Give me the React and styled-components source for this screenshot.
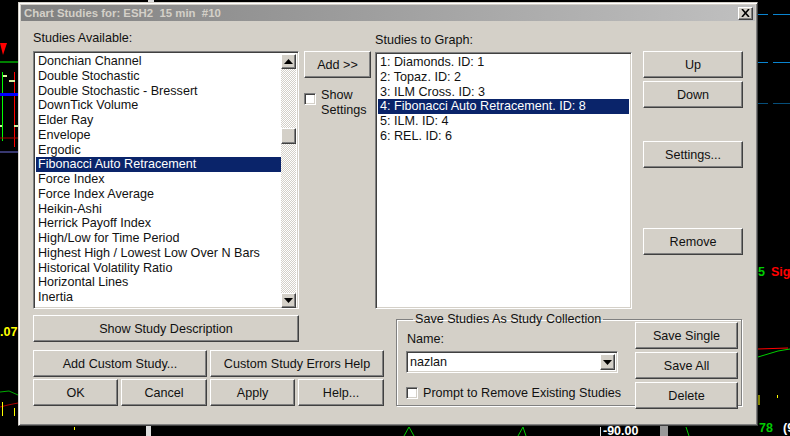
import React from "react";
import styled, { createGlobalStyle, css } from "styled-components";

const Global = createGlobalStyle`
  html, body { margin: 0; padding: 0; background: #000; }
  #root { width: 790px; height: 436px; overflow: hidden; }
`;

const face = "#d4d0c8";
const raised = css`
  background: ${face};
  border: 1px solid;
  border-color: #fff #404040 #404040 #fff;
  box-shadow: inset -1px -1px 0 #808080, inset 1px 1px 0 ${face};
`;
const sunken = css`
  background: #fff;
  border: 1px solid;
  border-color: #808080 #fff #fff #808080;
  box-shadow: inset 1px 1px 0 #404040, inset -1px -1px 0 ${face};
`;

const Desktop = styled.div`
  position: relative;
  width: 790px;
  height: 436px;
  background: #000;
  overflow: hidden;
  font-family: "Liberation Sans", Arial, sans-serif;
`;
const ChartArt = styled.svg`
  position: absolute;
  inset: 0;
`;
const ChartLabel = styled.span`
  position: absolute;
  left: ${(p) => p.$x}px;
  top: ${(p) => p.$y}px;
  color: ${(p) => p.$color};
  font: bold 12.5px/14px "Liberation Sans", Arial, sans-serif;
`;
const Dialog = styled.div`
  position: absolute;
  left: 18px;
  top: 2px;
  width: 740px;
  height: 424px;
  box-sizing: border-box;
  background: ${face};
  border: 1px solid;
  border-color: #d4d0c8 #404040 #404040 #d4d0c8;
  box-shadow: inset 1px 1px 0 #fff, inset -1px -1px 0 #808080;
  padding: 2px;
  color: #111;
  font-size: 12.6px;
`;
const TitleBar = styled.div`
  height: 16px;
  display: flex;
  align-items: center;
  justify-content: space-between;
  padding: 0 2px 0 3px;
  background: linear-gradient(90deg, #808080, #c0c0c0);
  color: #d4d0c8;
  font-weight: bold;
  font-size: 11.4px;
  white-space: pre;
`;
const CloseBox = styled.div`
  ${raised}
  width: 15px;
  height: 13px;
  box-sizing: border-box;
  display: flex;
  align-items: center;
  justify-content: center;
`;
const Body = styled.div`
  display: flex;
  padding: 10px 0 0 12px;
`;
const LeftCol = styled.div`
  width: 351px;
  display: flex;
  flex-direction: column;
`;
const Caption = styled.div`
  height: 15px;
  line-height: 15px;
  white-space: nowrap;
`;
const ListFrame = styled.div`
  ${sunken}
  box-sizing: border-box;
  position: relative;
  overflow: hidden;
  display: flex;
  width: ${(p) => p.$w}px;
  height: ${(p) => p.$h}px;
  margin-top: ${(p) => p.$mt}px;
  padding: 2px;
`;
const Rows = styled.div`
  flex: 1;
  min-width: 0;
  overflow: hidden;
`;
const Row = styled.div`
  height: 14.75px;
  line-height: 14.75px;
  padding-left: 2px;
  white-space: nowrap;
  ${(p) => p.$on && css`background: #0a246a; color: #fff;`}
`;
const ScrollTrack = styled.div`
  width: 15px;
  flex: none;
  display: flex;
  flex-direction: column;
  background-color: #ece9e2;
  background-image: conic-gradient(#fff 25%, ${face} 0 50%, #fff 0 75%, ${face} 0);
  background-size: 2px 2px;
`;
const ScrollBtn = styled.div`
  ${raised}
  width: 15px;
  height: ${(p) => p.$h || 15}px;
  box-sizing: border-box;
  flex: none;
  display: flex;
  align-items: center;
  justify-content: center;
  margin-top: ${(p) => p.$mt || 0}px;
`;
const Btn = styled.button`
  ${raised}
  box-sizing: border-box;
  padding: 0;
  height: 27px;
  width: ${(p) => p.$w || 100}px;
  margin-top: ${(p) => p.$mt || 0}px;
  flex: none;
  font: inherit;
  color: #111;
  white-space: nowrap;
`;
const BtnRow = styled.div`
  display: flex;
  gap: 3px;
  margin-top: ${(p) => p.$mt}px;
`;
const MiddleCol = styled.div`
  width: 71px;
  padding-top: 20px;
  display: flex;
  flex-direction: column;
`;
const CheckBox = styled.span`
  ${sunken}
  display: block;
  width: 12px;
  height: 12px;
  box-sizing: border-box;
  flex: none;
`;
const ShowSettings = styled.label`
  display: flex;
  gap: 5px;
  margin-top: 10px;
  line-height: 15px;
  align-items: flex-start;
  & > span:first-child { margin-top: 5px; }
`;
const RightArea = styled.div`
  display: flex;
  flex-direction: column;
`;
const TopRight = styled.div`
  display: flex;
  gap: 11px;
`;
const GraphCol = styled.div`
  width: 257px;
  padding-top: 2px;
`;
const SideButtons = styled.div`
  display: flex;
  flex-direction: column;
  padding-top: 20px;
`;
const Group = styled.fieldset`
  box-sizing: border-box;
  margin: 3px 0 0 21px;
  width: 346px;
  height: 94px;
  padding: 0 3px 0 10px;
  border: 1px solid #808080;
  box-shadow: 1px 1px 0 #fff, inset 1px 1px 0 #fff;
  display: flex;
  gap: 17px;
  position: relative;
`;
const GroupLegend = styled.legend`
  padding: 0 2px;
  margin-left: 6px;
  line-height: 14px;
`;
const GroupForm = styled.div`
  width: 212px;
  flex: none;
  margin-left: -1px;
  display: flex;
  flex-direction: column;
`;
const NameLabel = styled.div`
  margin: 6px 0 0 1px;
  line-height: 15px;
`;
const Combo = styled.div`
  ${sunken}
  box-sizing: border-box;
  height: 22px;
  margin-top: 4px;
  padding: 2px;
  display: flex;
`;
const ComboValue = styled.div`
  flex: 1;
  line-height: 17px;
  padding-left: 1px;
`;
const PromptRow = styled.label`
  display: flex;
  align-items: center;
  gap: 5px;
  margin-top: 13px;
  white-space: nowrap;
`;
const GroupButtons = styled.div`
  display: flex;
  flex-direction: column;
  margin-top: -4px;
`;

const Up = () => (
  <svg width="9" height="5" viewBox="0 0 9 5"><path d="M4.5 0 9 5H0z" fill="#000" /></svg>
);
const Down = () => (
  <svg width="9" height="5" viewBox="0 0 9 5"><path d="M0 0h9L4.5 5z" fill="#000" /></svg>
);

const avail = [
  "Donchian Channel", "Double Stochastic", "Double Stochastic - Bressert", "DownTick Volume",
  "Elder Ray", "Envelope", "Ergodic", "Fibonacci Auto Retracement", "Force Index",
  "Force Index Average", "Heikin-Ashi", "Herrick Payoff Index", "High/Low for Time Period",
  "Highest High / Lowest Low Over N Bars", "Historical Volatility Ratio", "Horizontal Lines",
  "Inertia", "Inside Bar",
];
const graph = [
  "1: Diamonds. ID: 1", "2: Topaz. ID: 2", "3: ILM Cross. ID: 3",
  "4: Fibonacci Auto Retracement. ID: 8", "5: ILM. ID: 4", "6: REL. ID: 6",
];

export default function App() {
  return (
    <Desktop>
      <Global />
      <ChartArt width="790" height="436" viewBox="0 0 790 436">
        <path d="M0 43h7l-3 9-1 3-1-4z" fill="#f00" />
        <path d="M0 62h18" stroke="#0f0" />
        <path d="M2.5 72v69" stroke="#0f0" />
        <path d="M14.500 72v75" stroke="#f00" />
        <path d="M0 138h18" stroke="#a00" />
        <path d="M0 94.500h18" stroke="#00f" strokeWidth="3" />
        <path d="M0 152h18" stroke="#7070e0" />
        <path d="M3 76h4M9 81h6M0 126h2M14 126h4" stroke="#d8f0a0" strokeWidth="2" />
        <path d="M0 392l9 -1 9 4" stroke="#0a0" fill="none" />
        <path d="M0 407l8 -2 10-2" stroke="#a00" fill="none" />
        <path d="M2.500 402v14M14.500 408v8M74.500 427v3" stroke="#ff0" />
        <path d="M146 426h5v10h-5z" fill="#ddd" />
        <path d="M148 0h6v2h-6z" fill="#ddd" />
        <path d="M758 14.500h10M773 14.500h17M758 62.500h10M773 62.500h17" stroke="#0a84d0" />
        <path d="M758 103.500h10M773 103.500h17" stroke="#064e7a" />
        <path d="M758 349l30-1" stroke="#f00" />
        <path d="M758 357l20-6 12-2" stroke="#0c0" />
        <path d="M758 395h2v10h-2z" fill="#808000" />
        <path d="M777.500 395v3" stroke="#ff0" />
        <path d="M600.500 427v9" stroke="#ddd" />
        <path d="M660 426h8v10h-8z" fill="#999" />
        <path d="M404 436l5 -9 5 9M518 436l5-9 3 9M686 427l3 9" stroke="#0c0" fill="none" />
      </ChartArt>
      <ChartLabel $x={0} $y={325} $color="#ff0">.07</ChartLabel>
      <ChartLabel $x={758} $y={265} $color="#0c0">5</ChartLabel>
      <ChartLabel $x={771} $y={265} $color="#f00">Sig</ChartLabel>
      <ChartLabel $x={759} $y={421} $color="#0c0">78</ChartLabel>
      <ChartLabel $x={783} $y={421} $color="#fff">(9</ChartLabel>
      <ChartLabel $x={603} $y={424} $color="#fff">-90.00</ChartLabel>

      <Dialog>
        <TitleBar>
          <span>{"Chart Studies for: ESH2  15 min  #10"}</span>
          <CloseBox>
            <svg width="9" height="8" viewBox="0 0 9 8">
              <path d="M1 0l7 8M8 0L1 8" stroke="#000" strokeWidth="1.6" />
            </svg>
          </CloseBox>
        </TitleBar>
        <Body>
          <LeftCol>
            <Caption>Studies Available:</Caption>
            <ListFrame $w={266} $h={258} $mt={5}>
              <Rows>
                {avail.map((t) => (
                  <Row key={t} $on={t.startsWith("Fibonacci")}>{t}</Row>
                ))}
              </Rows>
              <ScrollTrack>
                <ScrollBtn><Up /></ScrollBtn>
                <ScrollBtn $h={16} $mt={59} />
                <ScrollBtn $mt={149}><Down /></ScrollBtn>
              </ScrollTrack>
            </ListFrame>
            <Btn $w={266} $mt={6}>Show Study Description</Btn>
            <BtnRow $mt={8}>
              <Btn $w={174}>Add Custom Study...</Btn>
              <Btn $w={174}>Custom Study Errors Help</Btn>
            </BtnRow>
            <BtnRow $mt={2}>
              <Btn $w={85}>OK</Btn>
              <Btn $w={86}>Cancel</Btn>
              <Btn $w={85}>Apply</Btn>
              <Btn $w={86}>Help...</Btn>
            </BtnRow>
          </LeftCol>
          <MiddleCol style={{ marginLeft: -80 }}>
            <Btn $w={67}>Add &gt;&gt;</Btn>
            <ShowSettings>
              <CheckBox />
              <span>Show<br />Settings</span>
            </ShowSettings>
          </MiddleCol>
          <RightArea>
            <TopRight>
              <GraphCol>
                <Caption>Studies to Graph:</Caption>
                <ListFrame $w={257} $h={257} $mt={4}>
                  <Rows>
                    {graph.map((t) => (
                      <Row key={t} $on={t.startsWith("4:")}>{t}</Row>
                    ))}
                  </Rows>
                </ListFrame>
              </GraphCol>
              <SideButtons>
                <Btn>Up</Btn>
                <Btn $mt={3}>Down</Btn>
                <Btn $mt={33}>Settings...</Btn>
                <Btn $mt={60}>Remove</Btn>
              </SideButtons>
            </TopRight>
            <Group>
              <GroupLegend>Save Studies As Study Collection</GroupLegend>
              <GroupForm>
                <NameLabel>Name:</NameLabel>
                <Combo>
                  <ComboValue>nazlan</ComboValue>
                  <ScrollBtn $h={16}><Down /></ScrollBtn>
                </Combo>
                <PromptRow>
                  <CheckBox />
                  <span>Prompt to Remove Existing Studies</span>
                </PromptRow>
              </GroupForm>
              <GroupButtons>
                <Btn $w={103}>Save Single</Btn>
                <Btn $w={103} $mt={3}>Save All</Btn>
                <Btn $w={103} $mt={3}>Delete</Btn>
              </GroupButtons>
            </Group>
          </RightArea>
        </Body>
      </Dialog>
    </Desktop>
  );
}
